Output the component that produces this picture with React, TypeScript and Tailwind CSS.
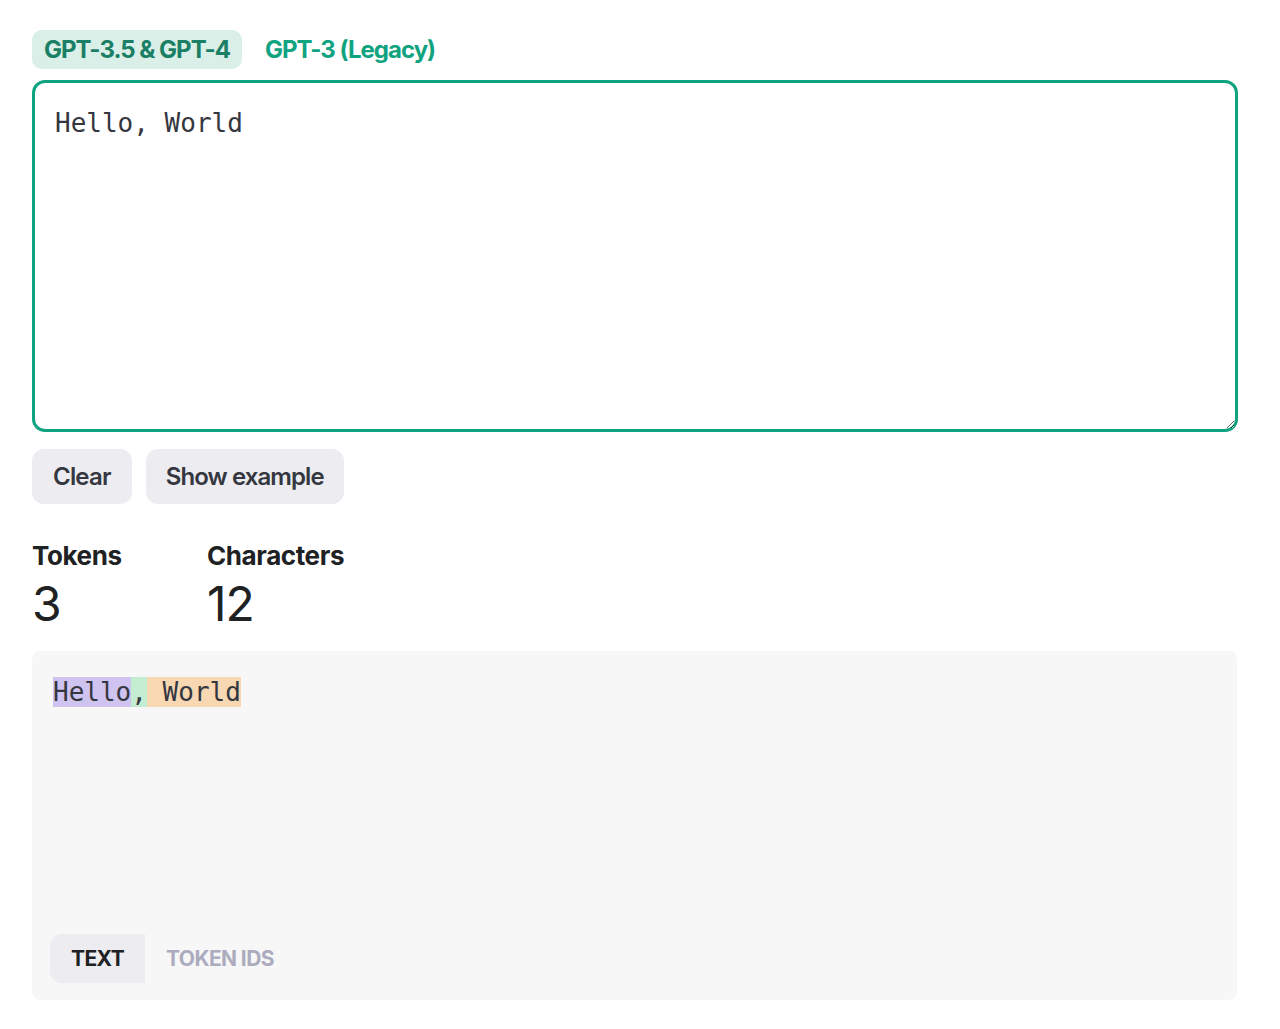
import { useState } from "react";

const sans = { fontFamily: "Inter, 'Noto Sans', sans-serif" };
const mono = { fontFamily: "'DejaVu Sans Mono', 'Liberation Mono', monospace" };

const tokens = [
  { text: "Hello", color: "bg-[#cfc3f0]" },
  { text: ",", color: "bg-[#c3ecd0]" },
  { text: " World", color: "bg-[#f7d8b3]" },
];

export default function App() {
  const [model, setModel] = useState("gpt4");
  const [text, setText] = useState("Hello, World");
  const [view, setView] = useState("text");

  return (
    <div className="min-h-screen bg-white px-8 pt-[30px]" style={sans}>
      <div className="w-[1206px]">
        {/* Model tabs */}
        <div className="flex items-center gap-[11px]">
          <button
            onClick={() => setModel("gpt4")}
            className={`h-[39px] rounded-[10px] px-3 text-[24px] font-bold tracking-[-1px] ${
              model === "gpt4" ? "bg-[#d9efe7] text-[#1a7f64]" : "text-[#10a37f]"
            }`}
          >
            GPT-3.5 &amp; GPT-4
          </button>
          <button
            onClick={() => setModel("gpt3")}
            className={`h-[39px] rounded-[10px] px-3 text-[24px] font-bold tracking-[-1px] ${
              model === "gpt3" ? "bg-[#d9efe7] text-[#1a7f64]" : "text-[#10a37f]"
            }`}
          >
            GPT-3 (Legacy)
          </button>
        </div>

        {/* Input */}
        <textarea
          value={text}
          onChange={(e) => setText(e.target.value)}
          autoFocus
          spellCheck={false}
          className="mt-[11px] block h-[352px] w-full rounded-[13px] border-[3px] border-[#10a37f] px-[20px] pb-[18px] pt-[22px] text-[26px] leading-[36px] text-[#353740] caret-[#202123] outline-none"
          style={mono}
        />

        {/* Actions */}
        <div className="mt-[17px] flex gap-[14px]">
          <button
            onClick={() => setText("")}
            className="h-[55px] rounded-[12px] bg-[#ececf1] px-[21px] text-[24px] font-semibold tracking-[-0.8px] text-[#353740]"
          >
            Clear
          </button>
          <button className="h-[55px] rounded-[12px] bg-[#ececf1] px-[20px] text-[24px] font-semibold tracking-[-0.9px] text-[#353740]">
            Show example
          </button>
        </div>

        {/* Stats */}
        <div className="mt-[36px] flex text-[#202123]">
          <div className="w-[175px]">
            <div className="text-[26px] font-bold leading-[32px] tracking-[-0.4px]">Tokens</div>
            <div className="mt-[4px] text-[48px] leading-[56px] tracking-[-1px]">3</div>
          </div>
          <div>
            <div className="text-[26px] font-bold leading-[32px] tracking-[-0.4px]">Characters</div>
            <div className="mt-[4px] text-[48px] leading-[56px] tracking-[-1px]">{text.length}</div>
          </div>
        </div>

        {/* Output */}
        <div className="mt-[19px] flex h-[349px] w-[1205px] flex-col justify-between rounded-[8px] bg-[#f7f7f8] pb-[17px] pl-[18px] pr-5 pt-[25px]">
          <div className="pl-[3px] text-[26px] leading-[32px] text-[#353740]" style={mono}>
            {view === "text" ? (
              tokens.map((t, i) => (
                <span key={i} className={`${t.color} whitespace-pre`}>
                  {t.text}
                </span>
              ))
            ) : (
              <span>[9906, 11, 4435]</span>
            )}
          </div>
          <div className="flex">
            <button
              onClick={() => setView("text")}
              className={`h-[49px] rounded-l-[12px] px-[21px] text-[21px] font-bold tracking-[-0.6px] ${
                view === "text" ? "bg-[#ececf1] text-[#202123]" : "text-[#acacbe]"
              }`}
            >
              TEXT
            </button>
            <button
              onClick={() => setView("ids")}
              className={`h-[49px] rounded-r-[12px] px-[21px] text-[21px] font-bold tracking-[-0.6px] ${
                view === "ids" ? "bg-[#ececf1] text-[#202123]" : "text-[#acacbe]"
              }`}
            >
              TOKEN IDS
            </button>
          </div>
        </div>
      </div>
    </div>
  );
}
